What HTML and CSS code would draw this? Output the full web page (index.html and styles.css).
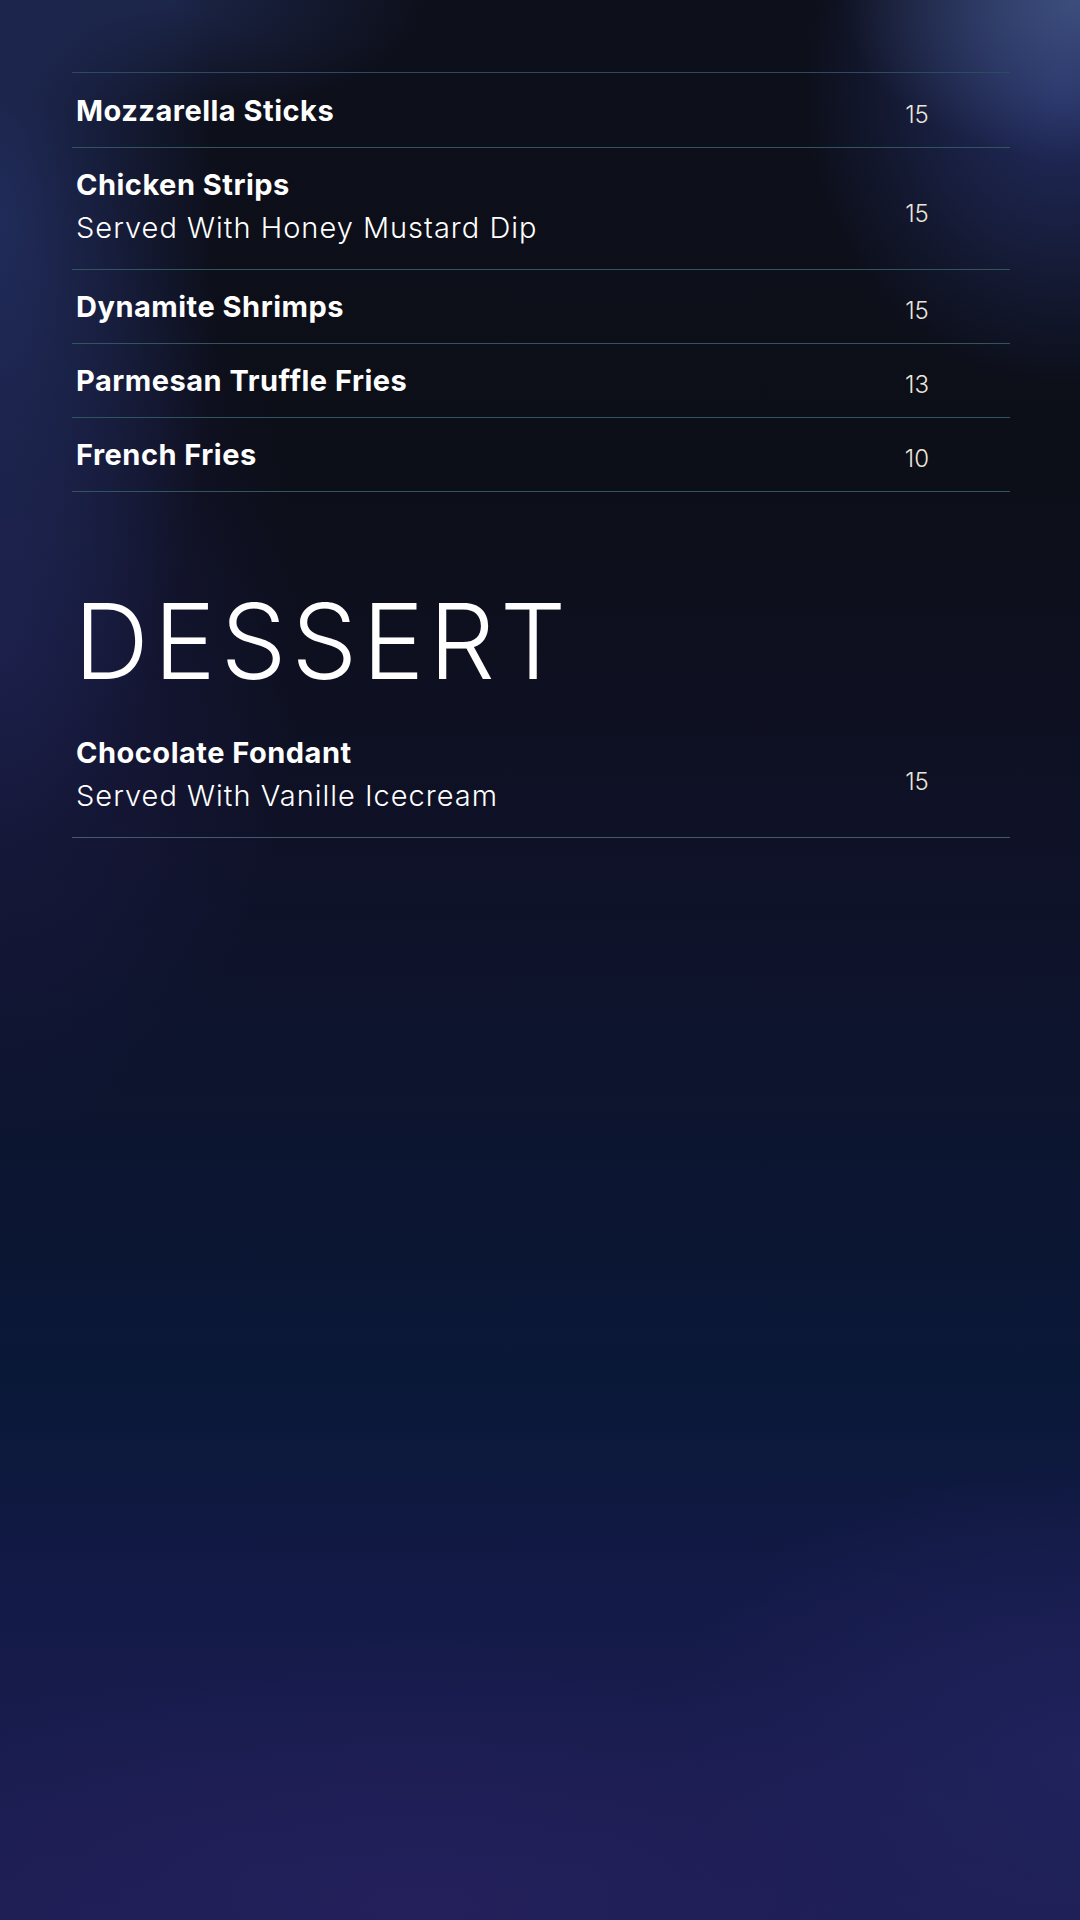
FILE: index.html
```html
<!DOCTYPE html>
<html lang="en">
<head>
<meta charset="utf-8">
<title>Menu</title>
<link rel="stylesheet" href="styles.css">
</head>
<body>
<div class="page">
  <section class="list list-top">
    <div class="row">
      <div class="info"><div class="name">Mozzarella Sticks</div></div>
      <div class="price">15</div>
    </div>
    <div class="row has-desc">
      <div class="info"><div class="name">Chicken Strips</div><div class="desc">Served With Honey Mustard Dip</div></div>
      <div class="price">15</div>
    </div>
    <div class="row">
      <div class="info"><div class="name">Dynamite Shrimps</div></div>
      <div class="price">15</div>
    </div>
    <div class="row">
      <div class="info"><div class="name">Parmesan Truffle Fries</div></div>
      <div class="price">13</div>
    </div>
    <div class="row">
      <div class="info"><div class="name">French Fries</div></div>
      <div class="price">10</div>
    </div>
  </section>

  <h2 class="heading">DESSERT</h2>

  <section class="list list-dessert">
    <div class="row has-desc">
      <div class="info"><div class="name">Chocolate Fondant</div><div class="desc">Served With Vanille Icecream</div></div>
      <div class="price">15</div>
    </div>
  </section>
</div>
</body>
</html>
```
FILE: styles.css
```css
html, body {
  margin: 0;
  padding: 0;
}
body {
  width: 1080px;
  height: 1920px;
  overflow: hidden;
  font-family: Inter, "Liberation Sans", sans-serif;
  color: #ffffff;
  background-color: #0d0f1c;
  background-image:
    radial-gradient(ellipse 240px 160px at 1080px 0px, rgba(72, 92, 142, 0.75), rgba(72, 92, 142, 0) 100%),
    radial-gradient(ellipse 260px 300px at 1060px 90px, rgba(38, 50, 110, 0.85), rgba(38, 50, 110, 0) 100%),
    radial-gradient(ellipse 220px 640px at 0px 220px, rgba(35, 48, 100, 0.85), rgba(35, 48, 100, 0) 100%),
    radial-gradient(ellipse 260px 120px at 170px 0px, rgba(40, 55, 110, 0.55), rgba(40, 55, 110, 0) 100%),
    radial-gradient(ellipse 300px 500px at 0px 640px, rgba(30, 30, 80, 0.7), rgba(30, 30, 80, 0) 100%),
    radial-gradient(ellipse 700px 260px at 420px 1900px, rgba(36, 32, 92, 0.9), rgba(36, 32, 92, 0) 100%),
    radial-gradient(ellipse 420px 300px at 1080px 1760px, rgba(34, 36, 96, 0.8), rgba(34, 36, 96, 0) 100%),
    linear-gradient(180deg, #0d0f1a 0%, #0c0e18 25%, #0f1228 45%, #0c1530 60%, #0a1838 72%, #141a48 84%, #1c1e52 100%);
}
.page {
  padding: 72px 70px 0 72px;
}
.list {
  width: 938px;
}
.list-top {
  border-top: 1px solid #2c4a62;
}
.row {
  display: flex;
  align-items: center;
  padding: 21px 0 21px 0;
  border-bottom: 1px solid #2f5560;
}
.row:first-child {
  padding-top: 22px;
}
.info {
  flex: 1;
  padding-left: 4px;
}
.name {
  font-size: 29px;
  font-weight: 700;
  line-height: 31px;
  letter-spacing: 0.5px;
}
.desc {
  font-size: 29px;
  font-weight: 300;
  line-height: 40px;
  margin-top: 8px;
  letter-spacing: 1px;
}
.price {
  width: 60px;
  margin-right: 63px;
  text-align: center;
  font-size: 24px;
  font-weight: 300;
  line-height: 23px;
  color: #ece6da;
  padding-top: 8px;
}
.row.has-desc .price {
  padding-top: 10px;
}
.heading {
  margin: 98px 0 23px 0;
  padding-left: 2px;
  font-size: 104px;
  font-weight: 350;
  line-height: 102px;
  letter-spacing: 5px;
}
.list-dessert .row {
  border-bottom-color: #445a72;
}
```
